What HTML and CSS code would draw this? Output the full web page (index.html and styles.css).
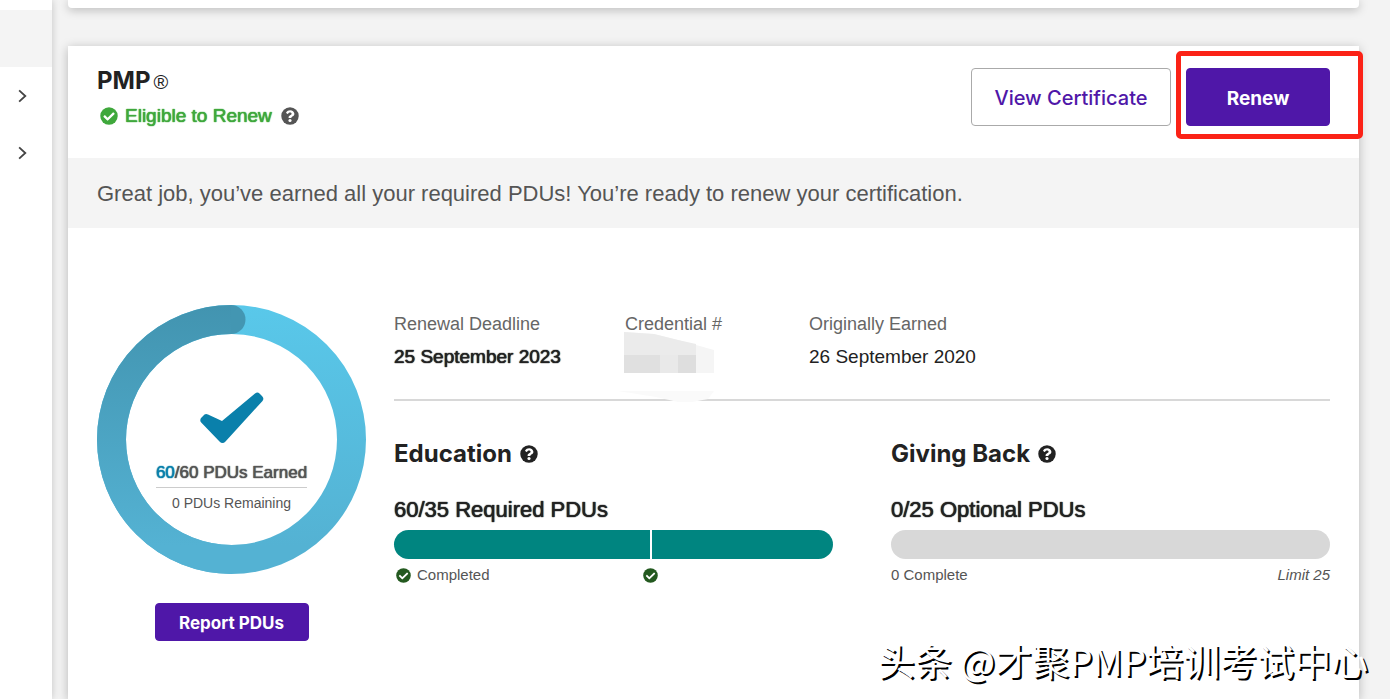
FILE: index.html
```html
<!DOCTYPE html>
<html lang="en">
<head>
  <meta charset="utf-8">
  <meta name="viewport" content="width=device-width, initial-scale=1.0">
  <title>PMP Certification</title>
  <link rel="stylesheet" href="styles.css">
</head>
<body>
  <!-- shared icons -->
  <svg class="defs" aria-hidden="true">
    <symbol id="icon-check" viewBox="0 0 512 512">
      <path fill="currentColor" d="M504 256a248 248 0 1 1-496 0 248 248 0 0 1 496 0z"/>
      <path fill="#fff" d="M227 387l184-184c6-6 6-16 0-22l-23-23c-6-6-16-6-22 0L216 308l-70-70c-6-6-16-6-22 0l-23 23c-6 6-6 16 0 22l104 104c6 6 16 6 22 0z"/>
    </symbol>
    <symbol id="icon-help" viewBox="0 0 512 512">
      <path fill="currentColor" d="M504 256a248 248 0 1 1-496 0 248 248 0 0 1 496 0z"/>
      <path fill="#fff" d="M262 90c-54 0-89 23-116 64-4 5-2 12 3 16l34 26c6 4 13 3 17-2 18-23 30-36 57-36 20 0 45 13 45 33 0 15-12 22-32 34-24 13-55 30-55 71v7c0 6 5 12 12 12h58c7 0 12-6 12-12v-4c0-29 84-30 84-108 0-58-61-101-119-101z"/>
      <circle fill="#fff" cx="256" cy="386" r="44"/>
    </symbol>
    <symbol id="icon-chevron" viewBox="0 0 8 12">
      <path d="M1 1l5.500 5-5.500 5" fill="none" stroke="currentColor" stroke-width="1.6"/>
    </symbol>
  </svg>

  <nav class="sidebar">
    <a class="side-item active" href="#" aria-label="Dashboard"></a>
    <a class="side-item" href="#" aria-label="Certifications"><svg class="chevron"><use href="#icon-chevron"/></svg></a>
    <a class="side-item" href="#" aria-label="Membership"><svg class="chevron"><use href="#icon-chevron"/></svg></a>
  </nav>

  <main>
    <section class="card card-prev"></section>

    <section class="card card-main">
      <header class="card-header">
        <div>
          <h1>PMP<span class="reg">®</span></h1>
          <p class="status">
            <svg class="icon"><use href="#icon-check"/></svg>
            <span class="heavy">Eligible to Renew</span>
            <svg class="icon help"><use href="#icon-help"/></svg>
          </p>
        </div>
        <div class="actions">
          <button class="btn btn-outline">View Certificate</button>
          <div class="highlight">
            <button class="btn btn-primary">Renew</button>
          </div>
        </div>
      </header>

      <p class="banner">Great job, you’ve earned all your required PDUs! You’re ready to renew your certification.</p>

      <div class="card-body">
        <div class="summary">
          <div class="ring">
            <svg class="ring-chart" viewBox="0 0 269 269" aria-hidden="true">
              <defs>
                <linearGradient id="light" gradientUnits="userSpaceOnUse" x1="0" y1="0" x2="0" y2="240">
                  <stop offset="0" stop-color="#59c8ea"/>
                  <stop offset="1" stop-color="#54b2d3"/>
                </linearGradient>
                <linearGradient id="dark" gradientUnits="userSpaceOnUse" x1="0" y1="0" x2="0" y2="240">
                  <stop offset="0" stop-color="#4294b0"/>
                  <stop offset="1" stop-color="#54b2d3"/>
                </linearGradient>
              </defs>
              <circle cx="134.5" cy="134.5" r="120" fill="none" stroke="url(#light)" stroke-width="29"/>
              <path d="M134.5 254.5a120 120 0 0 1 0-240" fill="none" stroke="url(#dark)" stroke-width="29"/>
              <path d="M134 0a14.5 14.5 0 0 1 0 29z" fill="#4396b2"/>
            </svg>
            <div class="ring-text">
              <svg class="big-check" viewBox="0 0 64 52" aria-hidden="true">
                <path d="M1.500 25.500 4.500 22.500Q6 21.500 8 22.500L22 29 55 1.500Q57.500-.5 59.500 1.500L62 4Q64.500 6.500 62.500 9L25.500 49.500Q22.500 52.500 19.500 49.500L1.200 30.500Q-.8 28 1.500 25.500z" fill="#0a80ab"/>
              </svg>
              <p class="earned heavy"><span class="count">60</span>/60 PDUs Earned</p>
              <p class="remaining">0 PDUs Remaining</p>
            </div>
          </div>
          <button class="btn btn-primary btn-small">Report PDUs</button>
        </div>

        <div class="details">
          <dl class="meta">
            <div>
              <dt>Renewal Deadline</dt>
              <dd class="heavy">25 September 2023</dd>
            </div>
            <div class="credential">
              <dt>Credential #</dt>
              <dd>
                <svg class="mosaic" viewBox="0 0 98 72" aria-hidden="true">
                  <path d="M6 1l30 2 24 6 36 10v23H6z" fill="#f5f5f5"/>
                  <path d="M6 1l30 2 24 6 18 4v11H6z" fill="#ebebeb"/>
                  <path d="M6 24h36v18H6z" fill="#e0e0e0"/>
                  <path d="M42 24h18v18H42z" fill="#e9e9e9"/>
                  <path d="M60 24h18v18H60z" fill="#dedede"/>
                  <path d="M0 60h96l-6 8-16 3H60l-22-5z" fill="#fafafa"/>
                </svg>
              </dd>
            </div>
            <div>
              <dt>Originally Earned</dt>
              <dd>26 September 2020</dd>
            </div>
          </dl>

          <div class="progress-row">
            <section>
              <h2>Education <svg class="icon"><use href="#icon-help"/></svg></h2>
              <h3 class="heavy">60/35 Required PDUs</h3>
              <div class="bar bar-full">
                <div class="bar-mark" style="width: 58.33%"></div>
              </div>
              <div class="legend">
                <div class="legend-left" style="width: 58.33%">
                  <span class="done"><svg class="icon-s"><use href="#icon-check"/></svg>Completed</span>
                  <svg class="icon-s mark-check"><use href="#icon-check"/></svg>
                </div>
              </div>
            </section>
            <section>
              <h2>Giving Back <svg class="icon"><use href="#icon-help"/></svg></h2>
              <h3 class="heavy">0/25 Optional PDUs</h3>
              <div class="bar"></div>
              <div class="legend"><span>0 Complete</span><em>Limit 25</em></div>
            </section>
          </div>
        </div>
      </div>
    </section>
  </main>

  <div class="watermark" lang="zh">头条 @才聚PMP培训考试中心</div>
</body>
</html>
```
FILE: styles.css
```css
* {
  box-sizing: border-box;
}

body {
  display: flex;
  min-height: 100vh;
  margin: 0;
  background: #f3f3f3;
  color: #222;
  font-family: "Liberation Sans", Arial, sans-serif;
}

h1, h2, h3, p, dl, dd {
  margin: 0;
}

.defs {
  position: absolute;
  width: 0;
  height: 0;
}

/* medium weight: regular face, slightly thickened */
.heavy {
  font-weight: normal;
  text-shadow: 0 0 1px currentColor, 0 0 1px currentColor;
}

/* sidebar */
.sidebar {
  flex: 0 0 52px;
  padding-top: 10px;
  background: #fff;
  box-shadow: 0 0 8px rgba(0, 0, 0, 0.2);
}

.side-item {
  display: flex;
  align-items: center;
  height: 57px;
  padding-left: 18px;
  color: #444;
}

.side-item.active {
  background: #f4f4f4;
}

.chevron {
  width: 9px;
  height: 14px;
}

/* cards */
main {
  flex: 1;
  display: flex;
  flex-direction: column;
  padding: 0 31px 0 16px;
}

.card {
  background: #fff;
  box-shadow: 0 2px 10px rgba(0, 0, 0, 0.25);
}

.card-prev {
  height: 8px;
  margin-bottom: 38px;
  border-radius: 0 0 4px 4px;
}

.card-main {
  flex: 1;
}

.card-header {
  display: flex;
  justify-content: space-between;
  align-items: flex-start;
  height: 112px;
  padding: 22px 29px 0;
}

h1 {
  font: 700 24px/26px Inter, sans-serif;
}

.reg {
  margin-left: 3px;
  font-family: "Liberation Sans", Arial, sans-serif;
  font-weight: 400;
  font-size: 20px;
}

.status {
  display: flex;
  align-items: center;
  margin-top: 9px;
  padding-left: 3px;
  color: #3fa83c;
  font-size: 19px;
  line-height: 24px;
}

.icon {
  width: 18px;
  height: 18px;
}

.status .icon {
  margin-right: 7px;
}

.status .help {
  margin-left: 9px;
  color: #555;
}

.actions {
  display: flex;
  gap: 15px;
}

.btn {
  height: 58px;
  padding: 2px 0 0;
  border: 1px solid #4f17a8;
  border-radius: 4px;
  font: 700 19px Inter, sans-serif;
  cursor: pointer;
}

.btn-outline {
  width: 200px;
  background: #fff;
  border-color: #aaa;
  color: #4f17a8;
  font-weight: 500;
  font-size: 20px;
}

.btn-primary {
  width: 144px;
  background: #4f17a8;
  color: #fff;
}

.btn-small {
  width: 154px;
  height: 38px;
  font-size: 17px;
}

.highlight {
  position: relative;
  height: 58px;
}

.highlight::after {
  content: "";
  position: absolute;
  inset: -17px -33px -13px -10px;
  border: 5px solid #fb2216;
  border-radius: 5px;
  pointer-events: none;
}

.banner {
  padding: 2px 29px 0;
  background: #f4f4f4;
  color: #555;
  font-size: 22px;
  line-height: 68px;
}

.card-body {
  display: flex;
  gap: 28px;
  padding: 77px 29px 40px;
}

/* left summary */
.summary {
  flex: 0 0 269px;
  display: flex;
  flex-direction: column;
  align-items: center;
  gap: 29px;
}

.ring {
  display: grid;
}

.ring-chart,
.ring-text {
  grid-area: 1 / 1;
}

.ring-chart {
  width: 269px;
  height: 269px;
}

.ring-text {
  display: flex;
  flex-direction: column;
  align-items: center;
  padding-top: 87px;
  color: #555;
}

.big-check {
  width: 64px;
  height: 52px;
}

.earned {
  margin-top: 16px;
  padding-bottom: 2px;
  border-bottom: 1px solid #ccc;
  font-size: 17px;
  line-height: 25px;
}

.count {
  color: #0a80ab;
}

.remaining {
  font-size: 14px;
  line-height: 30px;
}

/* right details */
.details {
  flex: 1;
}

.meta {
  display: grid;
  grid-template-columns: 231px 184px 1fr;
  padding: 8px 0 28px;
  border-bottom: 2px solid #d8d8d8;
}

dt {
  color: #666;
  font-size: 18px;
  line-height: 22px;
}

dd {
  padding-top: 8px;
  font-size: 19px;
  line-height: 28px;
}

.credential {
  position: relative;
}

.mosaic {
  position: absolute;
  top: 18px;
  left: -7px;
  width: 98px;
  height: 72px;
}

.progress-row {
  display: grid;
  grid-template-columns: 1fr 1fr;
  gap: 58px;
  padding-top: 38px;
}

h2 {
  display: flex;
  align-items: center;
  gap: 8px;
  font: 700 24px/30px Inter, sans-serif;
}

h3 {
  margin-top: 28px;
  font-size: 22px;
  line-height: 26px;
}

.bar {
  height: 29px;
  margin-top: 7px;
  border-radius: 15px;
  background: #d8d8d8;
  overflow: hidden;
}

.bar-full {
  background: #008580;
}

.bar-mark {
  box-sizing: content-box;
  height: 100%;
  border-right: 2px solid #fff;
}

.legend {
  display: flex;
  justify-content: space-between;
  margin-top: 6px;
  color: #555;
  font-size: 15px;
  line-height: 20px;
}

.legend-left {
  display: flex;
  align-items: center;
  justify-content: space-between;
}

.done {
  display: flex;
  align-items: center;
  gap: 6px;
  padding-left: 2px;
}

.icon-s {
  width: 15px;
  height: 15px;
  color: #23591f;
}

.mark-check {
  margin-right: -8px;
}

.watermark {
  position: absolute;
  right: 22px;
  bottom: 14px;
  color: #fff;
  font: 37px/50px "Noto Sans CJK SC", sans-serif;
  text-shadow: 2px 2px 0 #000;
  white-space: nowrap;
}
```
